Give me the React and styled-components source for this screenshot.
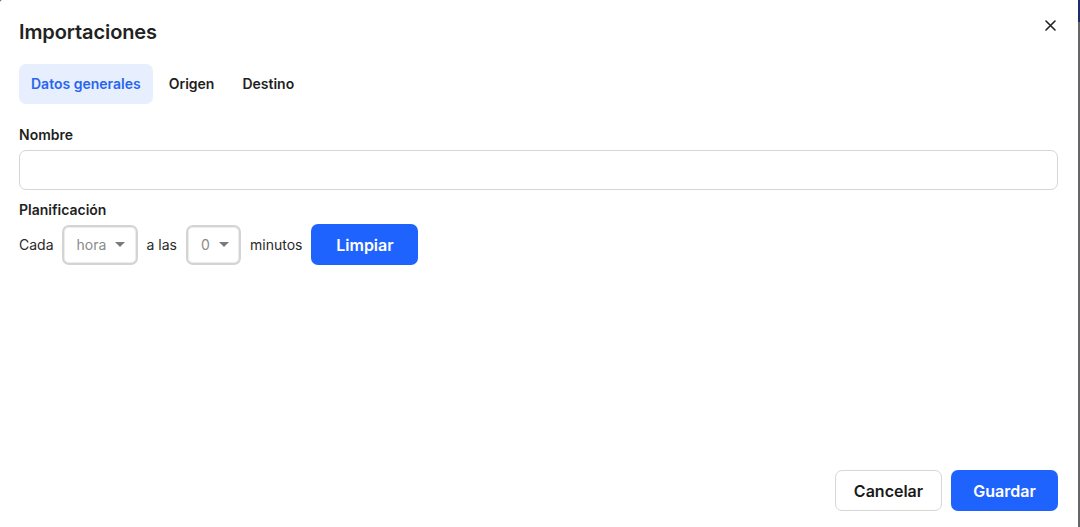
import React, { useState } from "react";
import styled, { createGlobalStyle } from "styled-components";

const GlobalStyle = createGlobalStyle`
  html, body {
    margin: 0;
    height: 100%;
  }
  body {
    font-family: Inter, "Noto Sans", "Liberation Sans", sans-serif;
    background: linear-gradient(#1f2b6b 0 22px, #66666a 22px);
    color: #1f1f1f;
  }
`;

const Modal = styled.div`
  box-sizing: border-box;
  width: 1078px;
  height: 527px;
  background: #fff;
  border-top-left-radius: 2px;
  display: flex;
  flex-direction: column;
  padding: 0 20px 16px 19px;
`;

const Header = styled.div`
  display: flex;
  align-items: center;
  justify-content: space-between;
  height: 64px;
  padding-bottom: 1px;
  box-sizing: border-box;

  h2 {
    margin: 0;
    font-size: 20px;
    font-weight: 600;
    letter-spacing: -0.1px;
    color: #222;
  }
`;

const CloseButton = styled.button`
  border: none;
  background: none;
  padding: 0;
  margin-bottom: 12px;
  width: 16px;
  height: 16px;
  display: flex;
  align-items: center;
  justify-content: center;
  cursor: pointer;
  color: #222;
`;

const Tabs = styled.div`
  display: flex;
  gap: 4px;
`;

const Tab = styled.button`
  font-family: inherit;
  font-size: 14px;
  font-weight: 600;
  height: 40px;
  padding: 0 12px 1px;
  border: none;
  border-radius: 7px;
  background: ${(p) => (p.$active ? "#e7eefd" : "transparent")};
  color: ${(p) => (p.$active ? "#2765ef" : "#1f1f1f")};
  cursor: pointer;
`;

const Label = styled.div`
  font-size: 14px;
  font-weight: 600;
  color: #1f1f1f;
  line-height: 16px;
  margin: ${(p) => p.$margin || "0"};
`;

const Input = styled.input`
  box-sizing: border-box;
  width: 100%;
  height: 40px;
  border: 1px solid #d6d5d2;
  border-radius: 7px;
  padding: 0 12px;
  font-family: inherit;
  font-size: 14px;
  outline: none;
  display: block;
`;

const ScheduleRow = styled.div`
  display: flex;
  align-items: center;
  gap: 9px;
  margin-top: 6px;
  font-size: 14px;
  color: #2a2a2a;

  & > span:first-child {
    margin-right: -1px;
  }
`;

const Select = styled.div`
  box-sizing: border-box;
  display: flex;
  align-items: center;
  gap: 9px;
  height: 40px;
  width: ${(p) => p.$width}px;
  padding: 0 13px;
  border: 2px solid #d4d4d4;
  border-radius: 7px;
  box-shadow: inset 0 0 0 1px #ececec;
  color: #8a8a8a;
  font-size: 14px;
`;

const Caret = styled.span`
  width: 0;
  height: 0;
  border-left: 5px solid transparent;
  border-right: 5px solid transparent;
  border-top: 5px solid #7a7a7a;
`;

const Button = styled.button`
  font-family: inherit;
  box-sizing: border-box;
  height: 41px;
  width: 107px;
  border-radius: 7px;
  font-size: 16px;
  font-weight: 600;
  cursor: pointer;
  border: ${(p) => (p.$primary ? "none" : "1px solid #d9d7d3")};
  background: ${(p) => (p.$primary ? "#1f63ff" : "#fff")};
  color: ${(p) => (p.$primary ? "#fff" : "#1a1a1a")};
`;

const Footer = styled.div`
  margin-top: auto;
  display: flex;
  justify-content: flex-end;
  gap: 9px;
`;

export default function App() {
  const [tab, setTab] = useState("general");
  const tabs = [
    { id: "general", label: "Datos generales" },
    { id: "origen", label: "Origen" },
    { id: "destino", label: "Destino" },
  ];

  return (
    <>
      <GlobalStyle />
      <Modal>
        <Header>
          <h2>Importaciones</h2>
          <CloseButton title="Cerrar">
            <svg width="11" height="11" viewBox="0 0 11 11">
              <path d="M1 1L10 10M10 1L1 10" stroke="currentColor" strokeWidth="1.6" strokeLinecap="round" />
            </svg>
          </CloseButton>
        </Header>
        <Tabs>
          {tabs.map((t) => (
            <Tab key={t.id} $active={tab === t.id} onClick={() => setTab(t.id)}>
              {t.label}
            </Tab>
          ))}
        </Tabs>
        <Label $margin="23px 0 7px">Nombre</Label>
        <Input />
        <Label $margin="12px 0 0">Planificación</Label>
        <ScheduleRow>
          <span>Cada</span>
          <Select $width={76}>
            <span>hora</span>
            <Caret />
          </Select>
          <span>a las</span>
          <Select $width={55}>
            <span>0</span>
            <Caret />
          </Select>
          <span>minutos</span>
          <Button $primary>Limpiar</Button>
        </ScheduleRow>
        <Footer>
          <Button>Cancelar</Button>
          <Button $primary>Guardar</Button>
        </Footer>
      </Modal>
    </>
  );
}
